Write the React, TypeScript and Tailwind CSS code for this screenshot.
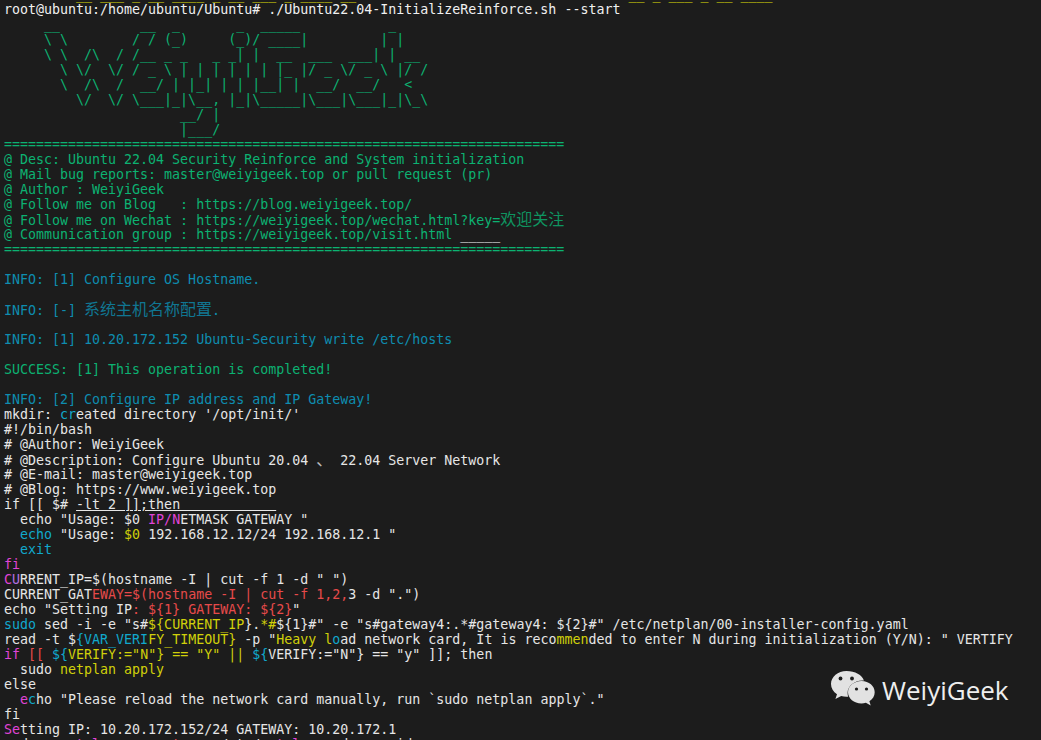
import React from "react";

type Seg = [string, string?];
const W = "text-[#e6e6e6]";
const G = "text-[#0cb272]";
const B = "text-[#11a8cd]";
const D = "text-[#0e8db0]";
const M = "text-[#e044d8]";
const P = "text-[#b070e0]";
const R = "text-[#e64a4a]";
const Y = "text-[#d0d00a]";
const U = "text-[#e6e6e6] underline decoration-[#e6e6e6]";

const art = [
  "     __          __  _       _  _____           _",
  "     \\ \\        / / (_)     (_)/ ____|         | |",
  "     \\ \\  /\\  / /__ _ _   _ _| |  __  ___  ___| | __",
  "       \\ \\/  \\/ / _ \\ | | | | | | |_ |/ _ \\/ _ \\ |/ /",
  "       \\  /\\  /  __/ | |_| | | |__| |  __/  __/   <",
  "         \\/  \\/ \\___|_|\\__, |_|\\_____|\\___|\\___|_|\\_\\",
  "                      __/ |",
  "                      |___/",
];
const rule = "=".repeat(70);

const lines: (Seg[] | null)[] = [
  [["         __ ___ _ __ ____ _ __ ___ _ ____ __" + " ".repeat(34) + "__ _ ___ _ __ ____", Y]],
  [["root@ubuntu:/home/ubuntu/Ubuntu# ./Ubuntu22.04-InitializeReinforce.sh --start", "text-[#f0f0f0]"]],
  ...art.map((a): Seg[] => [[a, G]]),
  [[rule, G]],
  [["@ Desc: Ubuntu 22.04 Security Reinforce and System initialization", G]],
  [["@ Mail bug reports: master@weiyigeek.top or pull request (pr)", G]],
  [["@ Author : WeiyiGeek", G]],
  [["@ Follow me on Blog   : https://blog.weiyigeek.top/", G]],
  [["@ Follow me on Wechat : https://weiyigeek.top/wechat.html?key=欢迎关注", G]],
  [["@ Communication group : https://weiyigeek.top/visit.html ", G], ["_____", W]],
  [[rule, G]],
  null,
  [["INFO: [1] Configure OS Hostname.", D]],
  null,
  [["INFO: [-] 系统主机名称配置.", D]],
  null,
  [["INFO: [1] 10.20.172.152 Ubuntu-Security write /etc/hosts", D]],
  null,
  [["SUCCESS: [1] This operation is completed!", G]],
  null,
  [["INFO: [2] Configure IP address and IP Gateway!", D]],
  [["mkdir: ", W], ["cr", B], ["eated directory '/opt/init/'", W]],
  [["#!/bin/bash", W]],
  [["# @Author: WeiyiGeek", W]],
  [["# @Description: Configure Ubuntu 20.04 、 22.04 Server Network", W]],
  [["# @E-mail: master@weiyigeek.top", W]],
  [["# @Blog: https://www.weiyigeek.top", W]],
  [["if [[ $# ", W], ["-lt 2 ]];then            ", U]],
  [["  echo \"Usage: $0 ", W], ["IP/", M], ["N", M], ["ETMASK GATEWAY \"", W]],
  [["  ", W], ["echo", B], [" \"Usage: ", W], ["$0", Y], [" 192.168.12.12/24 192.168.12.1 \"", W]],
  [["  ", W], ["exit", B]],
  [["fi", M]],
  [["C", M], ["U", P], ["RRENT_IP=$(hostname -I | cut -f 1 -d \" \")", W]],
  [["CURRENT_GAT", W], ["EWAY=$(hostname -I | cut -f 1,2,", R], ["3 -d \".\")", W]],
  [["echo \"Setting IP", W], [": ${1} GATEWAY: ${2}", R], ["\"", W]],
  [["sudo", B], [" sed -i -e \"s#", W], ["${CURRENT_IP", Y], ["}.", W], ["*#", Y], ["${1}#\" -e \"s#gateway4:.*#gateway4: ${2}#\" /etc/netplan/00-installer-config.yaml", W]],
  [["read -t $", W], ["{VAR_VERI", B], ["FY_TIMEOUT}", Y], [" -p \"", W], ["Heavy l", Y], ["o", B], ["ad network card, It is reco", W], ["mmen", Y], ["ded to enter N during initialization (Y/N): \" VERTIFY", W]],
  [["if", M], [" ", W], ["[[", R], [" ", W], ["${", B], ["VERIFY:=\"N\"} == \"Y\" ||", Y], [" ", W], ["${", B], ["VERIFY:=\"N\"} == \"y\" ]]; then", W]],
  [["  sudo ", W], ["netplan apply", Y]],
  [["else", W]],
  [["  ", W], ["e", M], ["c", B], ["ho \"Please reload the network card manually, run `sudo netplan apply`.\"", W]],
  [["fi", W]],
  [["Se", M], ["tting IP: 10.20.172.152/24 GATEWAY: 10.20.172.1", W]],
  [["sudo ", W], ["  ", W], ["netplan", M], [" gene", W], ["rat", R], ["e on /etc/ne", W], ["tplan", M], [" and override", W]],
];

function Text({ value, className }: { value: string; className?: string }) {
  const parts = value.split(/([\u3000-\u9fff]+)/);
  return (
    <span className={className}>
      {parts.map((p, i) =>
        i % 2 === 1 ? (
          <span key={i} className="text-[16px] leading-[15px] opacity-80">{p}</span>
        ) : (
          p
        )
      )}
    </span>
  );
}

function Logo() {
  return (
    <svg width="46" height="40" viewBox="0 0 46 40" className="shrink-0">
      <path fill="#e2e2e2" d="M16.5 1C7.900 1 1 6.800 1 14c0 4.200 2.300 7.800 6 10.200L5.400 29l5.800-3c1.700.5 3.400.8 5.300.8.6 0 1.100 0 1.700-.1-.4-1.200-.6-2.400-.6-3.700 0-7 6.600-12.600 14.800-12.600.5 0 1 0 1.500.1C32.300 5 25 1 16.500 1z" />
      <path fill="#e2e2e2" d="M31.500 11C23.900 11 18 16 18 22.200s5.900 11.200 13.500 11.200c1.500 0 3-.2 4.400-.6l4.800 2.700-1.300-4.200c3.200-2.100 5.300-5.300 5.300-9.100C44.700 16 39 11 31.500 11z" />
      <circle cx="10.500" cy="8.500" r="1.900" fill="#1c1c1c" />
      <circle cx="22" cy="8.500" r="1.900" fill="#1c1c1c" />
      <circle cx="26.500" cy="19" r="1.600" fill="#1c1c1c" />
      <circle cx="36.500" cy="19" r="1.600" fill="#1c1c1c" />
    </svg>
  );
}

export default function App() {
  return (
    <div className="relative w-[1041px] h-[740px] overflow-hidden bg-[#1c1c1c] pl-1 font-['DejaVu_Sans_Mono','Noto_Sans_CJK_SC',monospace] text-[13.3px] leading-[15px]">
      <div className="flex flex-col -mt-[13px]">
        {lines.map((segs, i) => (
          <div key={i} className="h-[15px] whitespace-pre">
            {segs?.map(([t, c], j) => (
              <Text key={j} value={t} className={c} />
            ))}
          </div>
        ))}
      </div>
      <div className="absolute left-[830px] top-[670px] flex items-center gap-[6px]">
        <Logo />
        <span className="font-['Open_Sans',sans-serif] text-[26px] leading-[40px] text-[#eeeeee]">WeiyiGeek</span>
      </div>
    </div>
  );
}
